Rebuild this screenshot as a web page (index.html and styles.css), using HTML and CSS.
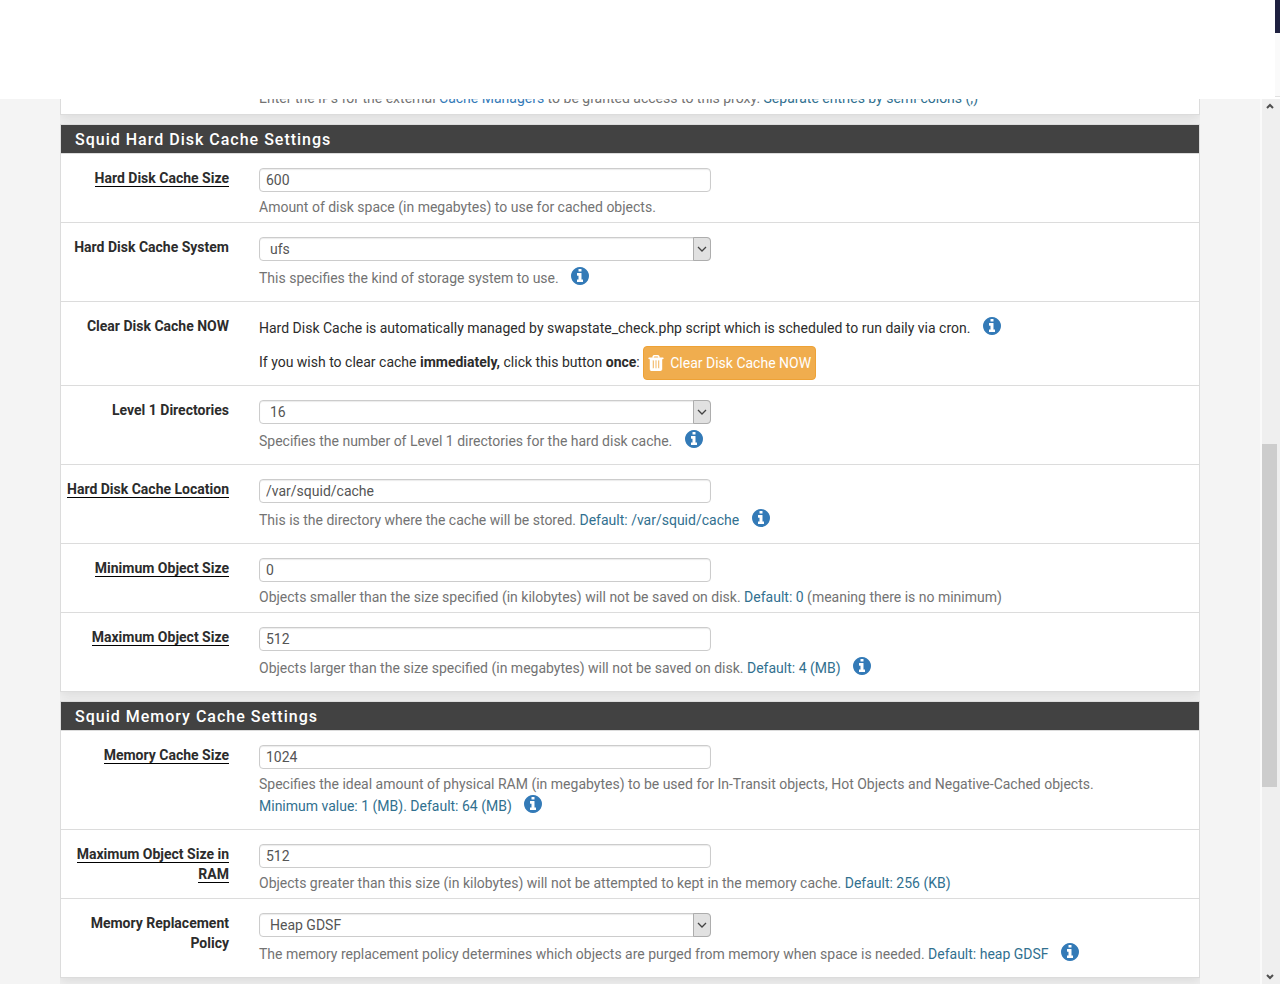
FILE: index.html
```html
<!DOCTYPE html>
<html lang="en">

<head>
    <meta charset="UTF-8">
    <meta name="viewport" content="width=device-width, initial-scale=1.0">
    <title>Proxy Server: Cache Management</title>
    <link rel="stylesheet" href="styles.css">
</head>

<body>
    <svg class="sprite" aria-hidden="true">
        <symbol id="icon-info" viewBox="0 128 1536 1536">
            <path d="M1024 1376v-160q0-14-9-23t-23-9h-96v-512q0-14-9-23t-23-9h-320q-14 0-23 9t-9 23v160q0 14 9 23t23 9h96v320h-96q-14 0-23 9t-9 23v160q0 14 9 23t23 9h448q14 0 23-9t9-23zm-128-896v-160q0-14-9-23t-23-9h-192q-14 0-23 9t-9 23v160q0 14 9 23t23 9h192q14 0 23-9t9-23zm640 416q0 209-103 385.500t-279.500 279.500-385.500 103-385.500-103-279.500-279.500-103-385.500 103-385.500 279.500-279.500 385.500-103 385.500 103 279.500 279.500 103 385.500z" />
        </symbol>
        <symbol id="icon-trash" viewBox="128 128 1536 1536">
            <path d="M704 1376v-704q0-14-9-23t-23-9h-64q-14 0-23 9t-9 23v704q0 14 9 23t23 9h64q14 0 23-9t9-23zm256 0v-704q0-14-9-23t-23-9h-64q-14 0-23 9t-9 23v704q0 14 9 23t23 9h64q14 0 23-9t9-23zm256 0v-704q0-14-9-23t-23-9h-64q-14 0-23 9t-9 23v704q0 14 9 23t23 9h64q14 0 23-9t9-23zm-544-992h448l-48-117q-7-9-17-11h-317q-10 2-17 11zm928 32v64q0 14-9 23t-23 9h-96v948q0 83-47 143.500t-113 60.500h-832q-66 0-113-58.500t-47-141.500v-952h-96q-14 0-23-9t-9-23v-64q0-14 9-23t23-9h309l70-167q15-37 54-63t79-26h320q40 0 79 26t54 63l70 167h309q14 0 23 9t9 23z" stroke="currentColor" stroke-width="40" />
        </symbol>
        <symbol id="icon-down" viewBox="0 0 10 6">
            <path d="M1 1l4 4 4-4" fill="none" stroke="currentColor" stroke-width="1.3" />
        </symbol>
        <symbol id="icon-scroll" viewBox="0 0 8 6">
            <path d="M1 1l3 3 3-3" fill="none" stroke="currentColor" stroke-width="2" />
        </symbol>
    </svg>

    <header class="topbar">
        <div class="topbar-edge"></div>
    </header>

    <div class="page">
        <main class="content">
            <form class="container">
                <section class="panel panel-scrolled">
                    <div class="row">
                        <div class="field">
                            <p class="help">Enter the IPs for the external <a href="#">Cache Managers</a> to be granted access to this proxy. <span class="hint">Separate entries by semi-colons (;)</span></p>
                        </div>
                    </div>
                </section>

                <section class="panel">
                    <h2>Squid Hard Disk Cache Settings</h2>
                    <div class="row">
                        <label for="disk-size"><span class="required">Hard Disk Cache Size</span></label>
                        <div class="field">
                            <input class="control" type="text" id="disk-size" value="600">
                            <p class="help">Amount of disk space (in megabytes) to use for cached objects.</p>
                        </div>
                    </div>
                    <div class="row row-info">
                        <label for="disk-system">Hard Disk Cache System</label>
                        <div class="field">
                            <div class="select">
                                <select class="control" id="disk-system"><option>ufs</option></select>
                                <span class="select-arrow"><svg><use href="#icon-down" /></svg></span>
                            </div>
                            <p class="help">This specifies the kind of storage system to use. <a class="info" href="#" aria-label="Info"><svg><use href="#icon-info" /></svg></a></p>
                        </div>
                    </div>
                    <div class="row">
                        <label for="clear-cache">Clear Disk Cache NOW</label>
                        <div class="field">
                            <p class="text">Hard Disk Cache is automatically managed by swapstate_check.php script which is scheduled to run daily via cron. <a class="info" href="#" aria-label="Info"><svg><use href="#icon-info" /></svg></a></p>
                            <p class="text action">If you wish to clear cache <b>immediately,</b> click this button <b>once</b>: <button class="btn" type="button" id="clear-cache"><svg><use href="#icon-trash" /></svg>Clear Disk Cache NOW</button></p>
                        </div>
                    </div>
                    <div class="row row-info">
                        <label for="level1">Level 1 Directories</label>
                        <div class="field">
                            <div class="select">
                                <select class="control" id="level1"><option>16</option></select>
                                <span class="select-arrow"><svg><use href="#icon-down" /></svg></span>
                            </div>
                            <p class="help">Specifies the number of Level 1 directories for the hard disk cache. <a class="info" href="#" aria-label="Info"><svg><use href="#icon-info" /></svg></a></p>
                        </div>
                    </div>
                    <div class="row row-info">
                        <label for="location"><span class="required">Hard Disk Cache Location</span></label>
                        <div class="field">
                            <input class="control" type="text" id="location" value="/var/squid/cache">
                            <p class="help">This is the directory where the cache will be stored. <span class="hint">Default: /var/squid/cache</span> <a class="info" href="#" aria-label="Info"><svg><use href="#icon-info" /></svg></a></p>
                        </div>
                    </div>
                    <div class="row">
                        <label for="min-size"><span class="required">Minimum Object Size</span></label>
                        <div class="field">
                            <input class="control" type="text" id="min-size" value="0">
                            <p class="help">Objects smaller than the size specified (in kilobytes) will not be saved on disk. <span class="hint">Default: 0</span> (meaning there is no minimum)</p>
                        </div>
                    </div>
                    <div class="row row-info">
                        <label for="max-size"><span class="required">Maximum Object Size</span></label>
                        <div class="field">
                            <input class="control" type="text" id="max-size" value="512">
                            <p class="help">Objects larger than the size specified (in megabytes) will not be saved on disk. <span class="hint">Default: 4 (MB)</span> <a class="info" href="#" aria-label="Info"><svg><use href="#icon-info" /></svg></a></p>
                        </div>
                    </div>
                </section>

                <section class="panel">
                    <h2>Squid Memory Cache Settings</h2>
                    <div class="row row-info">
                        <label for="mem-size"><span class="required">Memory Cache Size</span></label>
                        <div class="field">
                            <input class="control" type="text" id="mem-size" value="1024">
                            <p class="help">Specifies the ideal amount of physical RAM (in megabytes) to be used for In-Transit objects, Hot Objects and Negative-Cached objects.<br>
                                <span class="hint">Minimum value: 1 (MB). Default: 64 (MB)</span> <a class="info" href="#" aria-label="Info"><svg><use href="#icon-info" /></svg></a></p>
                        </div>
                    </div>
                    <div class="row">
                        <label for="mem-max"><span class="required">Maximum Object Size in RAM</span></label>
                        <div class="field">
                            <input class="control" type="text" id="mem-max" value="512">
                            <p class="help">Objects greater than this size (in kilobytes) will not be attempted to kept in the memory cache. <span class="hint">Default: 256 (KB)</span></p>
                        </div>
                    </div>
                    <div class="row row-info">
                        <label for="mem-policy">Memory Replacement Policy</label>
                        <div class="field">
                            <div class="select">
                                <select class="control" id="mem-policy"><option>Heap GDSF</option></select>
                                <span class="select-arrow"><svg><use href="#icon-down" /></svg></span>
                            </div>
                            <p class="help">The memory replacement policy determines which objects are purged from memory when space is needed. <span class="hint">Default: heap GDSF</span> <a class="info" href="#" aria-label="Info"><svg><use href="#icon-info" /></svg></a></p>
                        </div>
                    </div>
                </section>
            </form>
        </main>

        <div class="scrollbar" aria-hidden="true">
            <svg class="scroll-up"><use href="#icon-scroll" /></svg>
            <div class="scroll-track">
                <div class="scroll-thumb"></div>
            </div>
            <svg class="scroll-down"><use href="#icon-scroll" /></svg>
        </div>
    </div>
</body>

</html>
```
FILE: styles.css
```css
* {
    box-sizing: border-box;
}

body {
    display: flex;
    flex-direction: column;
    height: 100vh;
    margin: 0;
    overflow: hidden;
    background: #f4f4f4;
    color: #2c2c2c;
    font-family: Roboto, "Liberation Sans", sans-serif;
    font-size: 14px;
    line-height: 20px;
}

.sprite {
    display: none;
}

.topbar {
    display: flex;
    justify-content: flex-end;
    flex: none;
    height: 99px;
    background: #fff;
}

.topbar-edge {
    width: 5px;
    height: 97px;
    border-top: 33px solid #1f2140;
    border-bottom: 1px solid #e0e0e0;
    background: #fafafa;
}

.page {
    display: flex;
    flex: 1;
    min-height: 0;
}

.content {
    flex: 1;
    overflow: hidden;
}

.container {
    max-width: 1140px;
    min-height: 100%;
    margin: 0 auto;
    overflow: hidden;
    background: #f0f0f0;
}

/* panels */

.panel {
    margin-bottom: 9px;
    border: 1px solid #dcdcdc;
    background: #fff;
    box-shadow: 0 4px 10px rgba(0, 0, 0, 0.08);
}

/* only the end of this panel is in view */
.panel-scrolled {
    margin-top: -25px;
    border-top: none;
}

.panel h2 {
    margin: 0;
    padding: 5px 14px 3px;
    border-bottom: 1px solid #dcdcdc;
    background: #424242;
    color: #fff;
    font-size: 16px;
    font-weight: 500;
    letter-spacing: 1px;
}

.row {
    display: grid;
    grid-template-columns: 168px 1fr;
    column-gap: 30px;
    padding: 14px 15px 5px 0;
    border-bottom: 1px solid #dcdcdc;
}

.row-info {
    padding-bottom: 11px;
}

.row:last-child {
    border-bottom: none;
}

.panel-scrolled .row {
    padding-bottom: 6px;
}

.row label {
    grid-column: 1;
    font-weight: 700;
    text-align: right;
}

.required {
    border-bottom: 1px solid #000;
}

.field {
    grid-column: 2;
}

/* form controls */

.control {
    display: block;
    width: 100%;
    max-width: 452px;
    height: 24px;
    padding: 0 6px;
    border: 1px solid #ccc;
    border-radius: 4px;
    background: #fff;
    box-shadow: inset 0 1px 1px rgba(0, 0, 0, 0.08);
    color: #555;
    font: inherit;
}

.select {
    position: relative;
    max-width: 452px;
}

.select .control {
    padding: 0 28px 0 10px;
    appearance: none;
}

.select-arrow {
    position: absolute;
    top: 0;
    right: 0;
    display: flex;
    align-items: center;
    justify-content: center;
    width: 18px;
    height: 24px;
    border: 1px solid #adadad;
    border-radius: 0 4px 4px 0;
    background: #e1e1e1;
    color: #444;
    pointer-events: none;
}

.select-arrow svg {
    width: 10px;
    height: 6px;
}

.help {
    margin: 5px 0 0;
    color: #737373;
}

.panel-scrolled .help {
    margin: 0;
}

.hint {
    color: #31708f;
}

a {
    color: #337ab7;
    text-decoration: none;
}

.text {
    margin: 0;
}

.action {
    padding-top: 6px;
}

.info {
    display: inline-block;
    height: 24px;
    margin-left: 9px;
    padding-top: 1px;
    overflow: hidden;
    vertical-align: -7px;
}

.info svg {
    display: block;
    width: 18px;
    height: 18px;
    fill: currentColor;
}

.btn {
    display: inline-flex;
    align-items: center;
    gap: 6px;
    height: 34px;
    padding: 0 4px;
    border: 1px solid #eea236;
    border-radius: 4px;
    background: #f0ad4e;
    color: #fff;
    font: inherit;
    vertical-align: middle;
    cursor: pointer;
}

.btn svg {
    width: 16px;
    height: 16px;
    fill: currentColor;
}

/* scrollbar */

.scrollbar {
    display: flex;
    flex-direction: column;
    align-items: center;
    flex: none;
    width: 20px;
    padding: 4px 3px 4px 0;
    border-left: 2px solid #fafafa;
    background: #efefef;
    color: #505050;
}

.scrollbar svg {
    width: 8px;
    height: 6px;
}

.scroll-up {
    transform: rotate(180deg);
}

.scroll-track {
    flex: 1;
    width: 100%;
}

.scroll-thumb {
    height: 343px;
    margin-top: 335px;
    background: #cdcdcd;
}
```
